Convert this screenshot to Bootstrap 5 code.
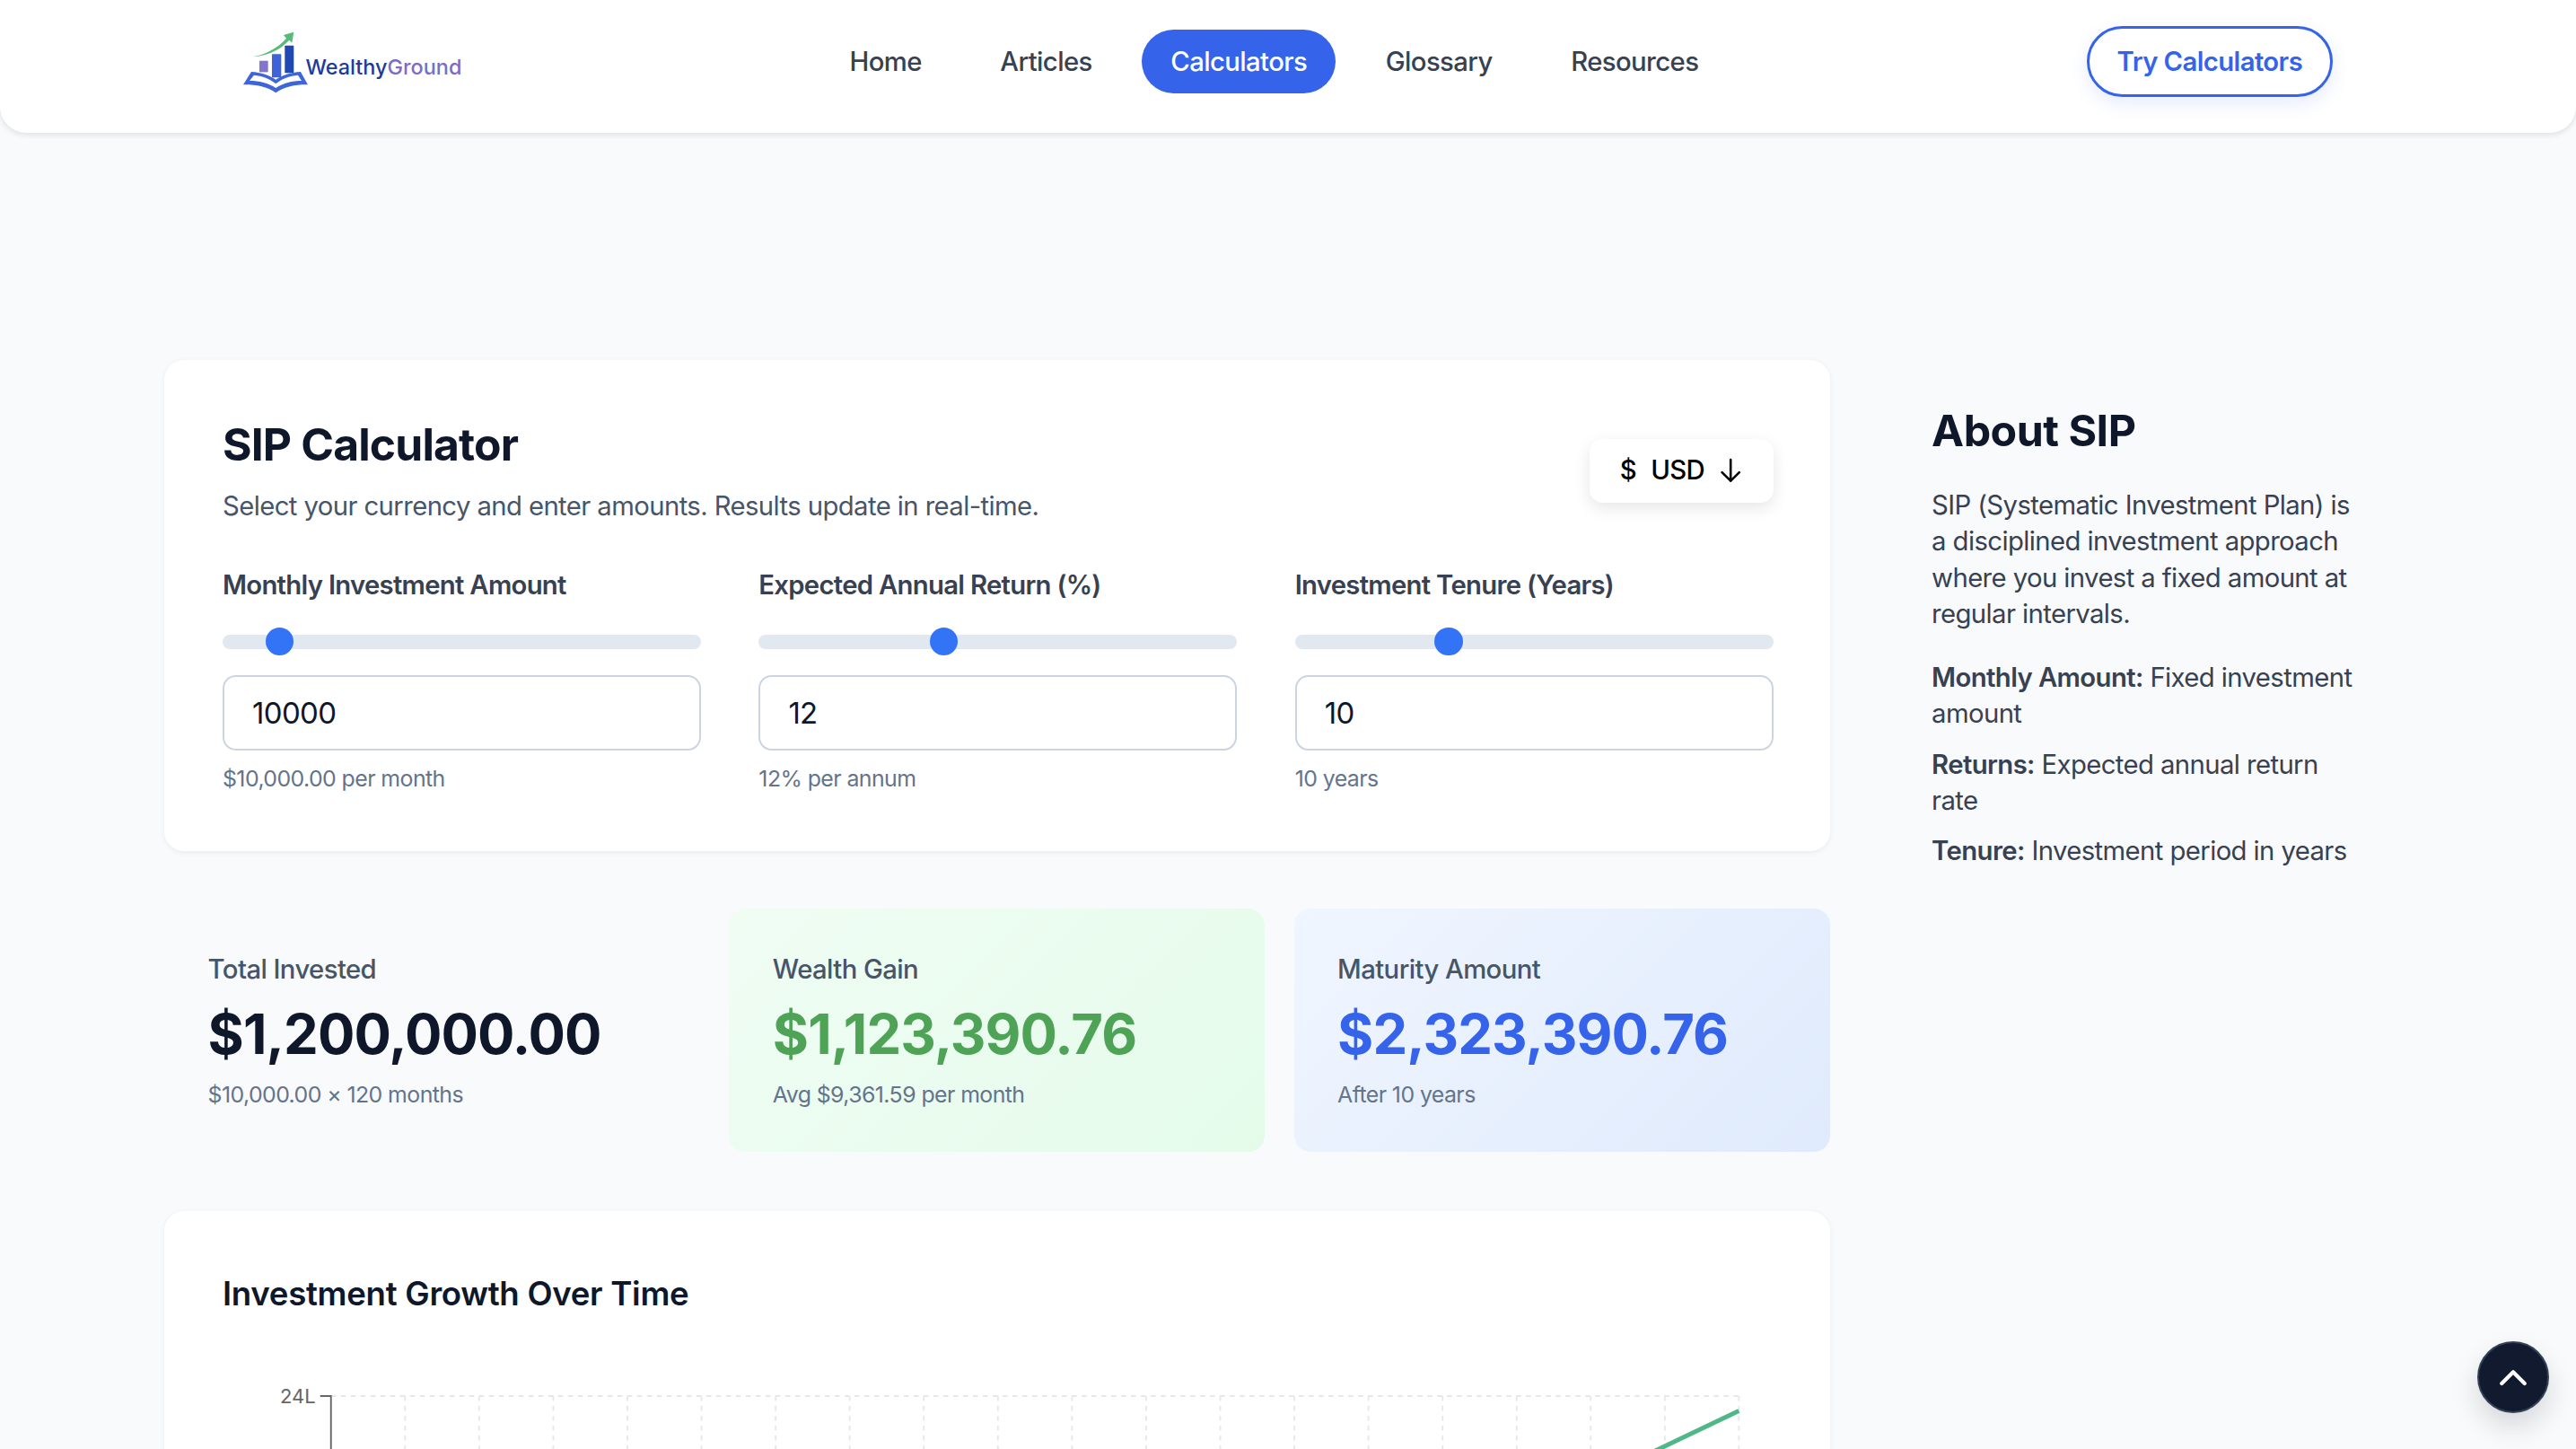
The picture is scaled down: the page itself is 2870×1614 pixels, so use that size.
<!DOCTYPE html>
<html lang="en">
<head>
  <meta charset="UTF-8" />
  <meta name="viewport" content="width=device-width, initial-scale=1.0"/>
  <title>SIP Calculator - WealthyGround</title>
  <link href="https://cdn.jsdelivr.net/npm/bootstrap@5.3.3/dist/css/bootstrap.min.css" rel="stylesheet">
  <style>
    html { font-size: 29.28px; height: 100%; overflow: hidden; }
    body {
      height: 100%;
      overflow: hidden;
      background-color: #f9fafb;
      font-family: Inter, "Liberation Sans", sans-serif;
      letter-spacing: -.02em;
      color: #0f172a;
    }
    .site-header {
      height: 5.0625rem;
      padding: 1rem 9.25rem 1.375rem 9.19rem;
      background: #fff;
      border-radius: 0 0 1rem 1rem;
      box-shadow: 0 .06rem .2rem rgba(15,23,42,.12);
    }
    .logo-wrap { width: 8.375rem; text-decoration: none; }
    .logo-wrap svg { width: 2.56rem; height: 2.45rem; flex: none; margin-right: -.12rem; }
    .logo-text { font-size: .8rem; font-weight: 500; letter-spacing: 0; margin-top: .4rem; color: #1e3a9a; }
    .logo-text span { color: #7d6cc6; }
    .main-nav { gap: .79rem; }
    .main-nav .nav-link {
      padding: 0 1.1rem;
      height: 2.44rem;
      line-height: 2.44rem;
      border-radius: 1.25rem;
      font-weight: 500;
      color: #374151;
    }
    .main-nav .nav-link.active { background: #3563e9; color: #fff; }
    .try-btn {
      height: 2.69rem;
      padding: 0 1.06rem;
      border: .125rem solid #3563e9;
      border-radius: 1.4rem;
      background: #fff;
      color: #3563e9;
      font-weight: 600;
      letter-spacing: -.02em;
      box-shadow: 0 .25rem .7rem rgba(53,99,233,.12);
    }
    .page-wrap { padding: 8.625rem 0 0 6.25rem; gap: 3.875rem; }
    .main-col { width: 63.375rem; flex: none; }
    .side-col { width: 16.4rem; flex: none; padding-top: 1.6rem; color: #374151; line-height: 1.375rem; }
    .side-col h2 { font-size: 1.65rem; line-height: 2.2rem; font-weight: 700; letter-spacing: -.01em; color: #0f172a; margin-bottom: 1.06rem; }
    .side-col p { margin-bottom: .55rem; }
    .side-col p.intro { margin-bottom: 1.06rem; }
    .side-col strong { font-weight: 600; }
    .panel {
      background: #fff;
      border: 0;
      border-radius: .75rem;
      padding: 2.125rem 2.15rem 2.125rem 2.22rem;
      box-shadow: 0 .06rem .2rem rgba(15,23,42,.06);
    }
    .panel h1 { font-size: 1.7rem; line-height: 2.25rem; font-weight: 700; letter-spacing: -.017em; margin-bottom: .44rem; }
    .panel-desc { line-height: 1.5rem; color: #475569; margin: 0; }
    .currency-btn {
      width: 7rem;
      height: 2.43rem;
      padding: 0;
      gap: .55rem;
      border: 0;
      border-radius: .5rem;
      background: #fff;
      color: #000;
      font-weight: 500;
      letter-spacing: -.02em;
      box-shadow: 0 .2rem .6rem rgba(0,0,0,.1);
    }
    .currency-btn svg { width: .9rem; height: .95rem; }
    .fields { --bs-gutter-x: 2.2rem; margin-top: 1.5rem; }
    .field-label { display: block; line-height: 1.5rem; font-weight: 600; letter-spacing: -.024em; color: #374151; margin-bottom: .875rem; }
    .amount-range { display: block; height: 1.0625rem; margin-bottom: .75rem; }
    .amount-range::-webkit-slider-runnable-track { height: .54rem; background: #e2e8f0; border-radius: .27rem; }
    .amount-range::-webkit-slider-thumb {
      width: 1.0625rem; height: 1.0625rem; margin-top: -.26rem;
      background: #3374f6; border: 0; border-radius: 50%;
    }
    .amount-range::-moz-range-track { height: .54rem; background: #e2e8f0; border-radius: .27rem; }
    .amount-range::-moz-range-thumb { width: 1.0625rem; height: 1.0625rem; background: #3374f6; border: 0; border-radius: 50%; }
    .amount-input {
      height: 2.875rem;
      padding: 0 1.06rem;
      border: 2.4px solid #cbd5e1;
      border-radius: .5rem;
      font-size: 1.125rem;
      letter-spacing: -.02em;
      color: #0f172a;
    }
    .field-hint { font-size: .85rem; line-height: 1.25rem; color: #64748b; margin-top: .44rem; }
    .stats { --bs-gutter-x: 1.1rem; margin-top: 2.19rem; margin-bottom: 2.25rem; }
    .stat-box { height: 9.25rem; padding: 1.56rem 1.66rem 0; border-radius: .625rem; }
    .stat-green { background: linear-gradient(135deg, #f0fdf4, #e4fbea); }
    .stat-blue { background: linear-gradient(135deg, #f0f6ff, #dfeafc); }
    .stat-label { line-height: 1.5rem; font-weight: 500; color: #475569; }
    .stat-value { font-size: 2.1rem; line-height: 2.75rem; font-weight: 700; letter-spacing: -.015em; margin-top: .34rem; }
    .stat-green .stat-value { color: #4ea356; }
    .stat-blue .stat-value { color: #3563e9; }
    .stat-note { font-size: .85rem; line-height: 1.25rem; color: #64748b; margin-top: .31rem; }
    .chart-panel { padding-top: 2.36rem; height: 40rem; }
    .chart-panel h3 { font-size: 1.25rem; line-height: 1.625rem; font-weight: 600; letter-spacing: -.008em; margin: 0; }
    .chart-panel svg { display: block; width: 100%; height: 20.5rem; margin-top: 2.5rem; }
    .to-top {
      position: fixed;
      right: 30px;
      bottom: 40px;
      width: 80px;
      height: 80px;
      padding: 0;
      border: 2px solid #334155;
      border-radius: 50%;
      background: #111a2e;
      box-shadow: 0 .5rem 1rem rgba(15,23,42,.15);
    }
    .to-top svg { width: 34px; height: 34px; }
  </style>
</head>
<body>
  <header class="site-header d-flex justify-content-between align-items-center">
    <a href="#" class="logo-wrap d-flex align-items-center">
      <svg viewBox="85 95 225 215" aria-hidden="true">
        <path d="M123 186C165 178 205 158 235 124L226 113L260 103L254 139L245 130C212 165 170 182 123 186Z" fill="#56bb78"/>
        <rect x="145" y="199" width="29" height="38" fill="#8574cf"/>
        <rect x="187" y="177" width="31" height="78" rx="2" fill="#3f62d6"/>
        <rect x="230" y="148" width="30" height="92" rx="2" fill="#2148b0"/>
        <path d="M91 279L118 236C150 238 180 248 200 262C220 248 250 238 283 236L307 279C270 278 230 285 200 306C170 285 130 278 91 279Z" fill="#3f66d8"/>
        <path d="M112 266L127 247C152 250 178 258 196 273C198 276 202 276 204 273C222 258 248 250 274 247L286 266C255 266 225 274 200 290C175 274 145 266 112 266Z" fill="#fff"/>
      </svg>
      <span class="logo-text">Wealthy<span>Ground</span></span>
    </a>
    <nav class="nav main-nav">
      <a class="nav-link" href="#">Home</a>
      <a class="nav-link" href="#">Articles</a>
      <a class="nav-link active" href="#">Calculators</a>
      <a class="nav-link" href="#">Glossary</a>
      <a class="nav-link" href="#">Resources</a>
    </nav>
    <button class="btn try-btn" type="button">Try Calculators</button>
  </header>

  <div class="page-wrap d-flex align-items-start">
    <main class="main-col">
      <section class="card panel">
        <div class="d-flex justify-content-between align-items-center">
          <div>
            <h1>SIP Calculator</h1>
            <p class="panel-desc">Select your currency and enter amounts. Results update in real-time.</p>
          </div>
          <button class="btn currency-btn d-flex align-items-center justify-content-center" type="button">
            <span>$</span><span>USD</span>
            <svg viewBox="0 0 24 26" fill="none" stroke="#000" stroke-width="2.4" stroke-linecap="round" stroke-linejoin="round" aria-hidden="true">
              <path d="M12 2V24M3 15L12 24L21 15"/>
            </svg>
          </button>
        </div>
        <div class="row fields">
          <div class="col-4">
            <label class="field-label" for="amount">Monthly Investment Amount</label>
            <input type="range" class="form-range amount-range" min="500" max="100000" value="10000">
            <input id="amount" type="text" class="form-control amount-input" value="10000">
            <div class="field-hint">$10,000.00 per month</div>
          </div>
          <div class="col-4">
            <label class="field-label" for="rate">Expected Annual Return (%)</label>
            <input type="range" class="form-range amount-range" min="1" max="30" value="12">
            <input id="rate" type="text" class="form-control amount-input" value="12">
            <div class="field-hint">12% per annum</div>
          </div>
          <div class="col-4">
            <label class="field-label" for="tenure">Investment Tenure (Years)</label>
            <input type="range" class="form-range amount-range" min="1" max="30" value="10">
            <input id="tenure" type="text" class="form-control amount-input" value="10">
            <div class="field-hint">10 years</div>
          </div>
        </div>
      </section>

      <div class="row stats">
        <div class="col-4">
          <div class="stat-box">
            <div class="stat-label">Total Invested</div>
            <div class="stat-value">$1,200,000.00</div>
            <div class="stat-note">$10,000.00 × 120 months</div>
          </div>
        </div>
        <div class="col-4">
          <div class="stat-box stat-green">
            <div class="stat-label">Wealth Gain</div>
            <div class="stat-value">$1,123,390.76</div>
            <div class="stat-note">Avg $9,361.59 per month</div>
          </div>
        </div>
        <div class="col-4">
          <div class="stat-box stat-blue">
            <div class="stat-label">Maturity Amount</div>
            <div class="stat-value">$2,323,390.76</div>
            <div class="stat-note">After 10 years</div>
          </div>
        </div>
      </div>

      <section class="card panel chart-panel">
        <h3>Investment Growth Over Time</h3>
        <svg viewBox="247.4 1540 1726.8 600" aria-hidden="true">
          <path d="M368 1556H1936M450.5 1556V2100M533 1556V2100M615.6 1556V2100M698.1 1556V2100M780.6 1556V2100M863.2 1556V2100M945.7 1556V2100M1028.2 1556V2100M1110.8 1556V2100M1193.3 1556V2100M1275.8 1556V2100M1358.4 1556V2100M1440.9 1556V2100M1523.4 1556V2100M1606 1556V2100M1688.5 1556V2100M1771 1556V2100M1853.5 1556V2100M1936 1556V2100" fill="none" stroke="#e5e7eb" stroke-width="1.8" stroke-dasharray="5.5 5.5"/>
          <path d="M356 1556H368V2100" fill="none" stroke="#666" stroke-width="1.9"/>
          <text x="351" y="1564" text-anchor="end" font-size="22" letter-spacing="0" fill="#666">24L</text>
          <path d="M1936 1572.5L1849 1614L1750 1662" fill="none" stroke="#52b788" stroke-width="5"/>
        </svg>
      </section>
    </main>

    <aside class="side-col">
      <h2>About SIP</h2>
      <p class="intro">SIP (Systematic Investment Plan) is a disciplined investment approach where you invest a fixed amount at regular intervals.</p>
      <p><strong>Monthly Amount:</strong> Fixed investment amount</p>
      <p><strong>Returns:</strong> Expected annual return rate</p>
      <p><strong>Tenure:</strong> Investment period in years</p>
    </aside>
  </div>

  <button class="btn to-top d-flex align-items-center justify-content-center" type="button" aria-label="Back to top">
    <svg viewBox="0 0 24 24" fill="none" stroke="#fff" stroke-width="3" stroke-linecap="round" stroke-linejoin="round"><path d="M3 17L12 8L21 17"/></svg>
  </button>

  <script src="https://cdn.jsdelivr.net/npm/bootstrap@5.3.3/dist/js/bootstrap.bundle.min.js"></script>
</body>
</html>
